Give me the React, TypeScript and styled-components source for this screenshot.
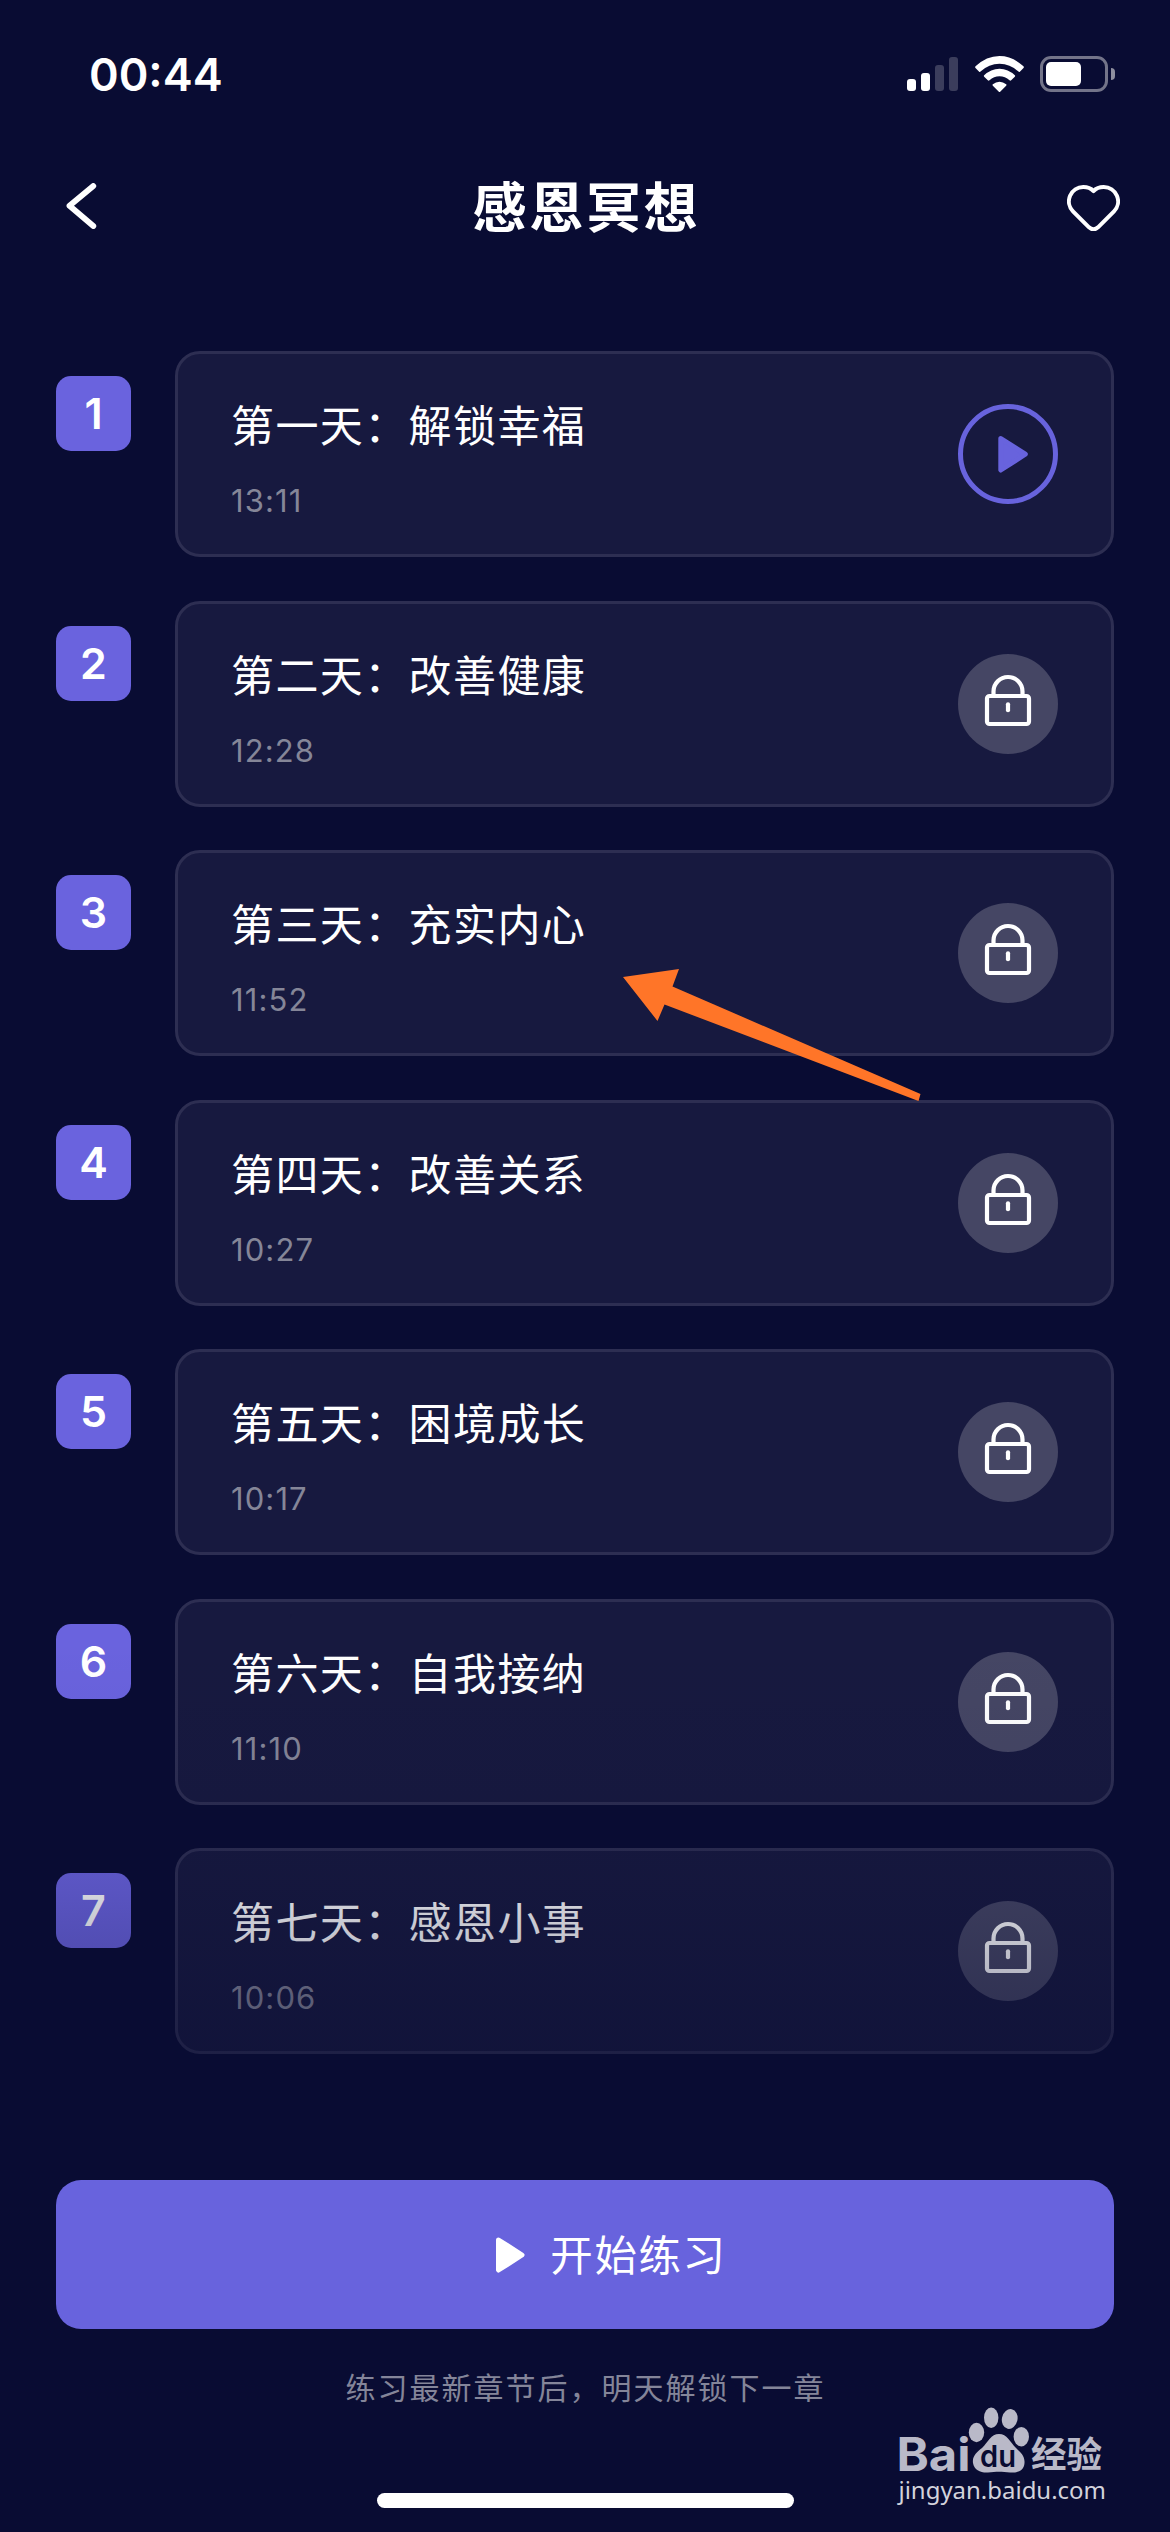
import React from "react";
import styled, { createGlobalStyle, css } from "styled-components";

const GlobalStyle = createGlobalStyle`
  * { box-sizing: border-box; }
  html, body { margin: 0; padding: 0; background: #090c33; }
  #root { width: 1170px; }
`;

const latin = `Inter, "Noto Sans CJK SC", sans-serif`;
const cjk = `"Noto Sans CJK SC", Inter, sans-serif`;

const Screen = styled.main`
  position: relative;
  display: flex;
  flex-direction: column;
  width: 1170px;
  height: 2532px;
  overflow: hidden;
  background: #090c33;
  color: #fff;
  font-family: ${cjk};
`;

const StatusBar = styled.div`
  display: flex;
  align-items: center;
  justify-content: space-between;
  height: 148px;
  padding: 0 55px 0 89px;
`;

const Clock = styled.div`
  padding-top: 1px;
  font: 600 45px/60px ${latin};
  letter-spacing: 0;
`;

const StatusIcons = styled.div`
  display: flex;
  align-items: flex-end;
`;

const Bars = styled.div`
  display: flex;
  align-items: flex-end;
  gap: 5px;
  height: 36px;
  padding-bottom: 1px;
  margin-right: 17px;
`;

const Bar = styled.span<{ $h: number; $on?: boolean }>`
  width: 9px;
  height: ${(p) => p.$h}px;
  border-radius: 3px;
  background: ${(p) => (p.$on ? "#fff" : "#3b3d5c")};
`;

const BatteryShell = styled.div`
  width: 68px;
  height: 36px;
  margin-left: 16px;
  padding: 3px;
  border: 3px solid #737489;
  border-radius: 11px;
`;

const BatteryLevel = styled.div`
  width: 35px;
  height: 24px;
  border-radius: 5px;
  background: #fff;
`;

const BatteryTip = styled.div`
  width: 4px;
  height: 12px;
  margin: 0 0 12px 3px;
  border-radius: 0 4px 4px 0;
  background: #8d8e9e;
`;

const Header = styled.header`
  display: grid;
  grid-template-columns: 100px 1fr 100px;
  align-items: center;
  height: 116px;
  padding: 0 35px;
`;

const Title = styled.h1`
  margin: 0;
  padding: 0 0 3px 3px;
  text-align: center;
  font: 700 54px/80px ${cjk};
  letter-spacing: 3px;
`;

const IconButton = styled.button<{ $side: "left" | "right" }>`
  display: flex;
  justify-content: ${(p) => (p.$side === "left" ? "flex-start" : "flex-end")};
  padding: ${(p) => (p.$side === "left" ? "0 0 0 30px" : "4px 15.5px 0 0")};
  border: 0;
  background: none;
`;

const Lessons = styled.ol`
  display: flex;
  flex-direction: column;
  gap: 43.5px;
  margin: 87px 0 0;
  padding: 0 56px;
  list-style: none;
`;

const Lesson = styled.li`
  display: flex;
  align-items: flex-start;
  gap: 44px;
  height: 206px;
`;

const Badge = styled.div`
  display: flex;
  align-items: center;
  justify-content: center;
  width: 75px;
  height: 75px;
  margin-top: 25px;
  border-radius: 15px;
  background: #6a63de;
  font: 600 43px/75px ${latin};
`;

const Card = styled.article`
  display: flex;
  flex: 1;
  align-items: center;
  justify-content: space-between;
  height: 206px;
  padding: 0 53px;
  border: 3px solid #2d2e52;
  border-radius: 25px;
  background: #17193f;
`;

const CardText = styled.div`
  display: flex;
  flex-direction: column;
  gap: 28px;
  padding-top: 6px;
`;

const LessonTitle = styled.h2`
  margin: 0;
  font: 400 43px/60px ${cjk};
  letter-spacing: 1.4px;
`;

const Duration = styled.span`
  font: 400 31px/40px ${latin};
  letter-spacing: 1.1px;
  color: #858698;
`;

const Action = styled.button<{ $locked: boolean }>`
  width: 100px;
  height: 100px;
  padding: 0;
  border: 0;
  border-radius: 50%;
  background: none;
  ${(p) =>
    p.$locked &&
    css`
      background: #454664;
    `}
`;

const Glyph = styled.svg`
  display: block;
  flex: none;
`;

const BottomFade = styled.div`
  position: absolute;
  left: 0;
  right: 0;
  top: 1640px;
  height: 530px;
  background: linear-gradient(
    rgba(9, 12, 51, 0),
    rgba(9, 12, 51, 0.04) 120px,
    rgba(9, 12, 51, 0.15) 233px,
    rgba(9, 12, 51, 0.25) 308px,
    rgba(9, 12, 51, 0.41) 414px,
    rgba(9, 12, 51, 0.58) 530px
  );
`;

const StartButton = styled.button`
  display: flex;
  align-items: center;
  justify-content: center;
  gap: 25px;
  height: 149px;
  margin: 126px 56px 0;
  padding: 0 0 0 53px;
  border: 0;
  border-radius: 25px;
  background: #6863dd;
  color: #fff;
`;

const StartLabel = styled.span`
  padding-bottom: 4px;
  font: 400 42.5px/60px ${cjk};
  letter-spacing: 1.6px;
`;

const Hint = styled.p`
  margin: 33px 0 0;
  padding-left: 1px;
  text-align: center;
  font: 400 30px/48px ${cjk};
  letter-spacing: 2px;
  color: #848599;
`;

const HomeIndicator = styled.div`
  width: 417px;
  height: 15px;
  margin: auto auto 24px;
  border-radius: 8px;
  background: #fff;
`;

const PointerArrow = styled.svg`
  position: absolute;
  left: 620px;
  top: 960px;
`;

const Watermark = styled.svg`
  position: absolute;
  left: 890px;
  top: 2400px;
`;

const lessons = [
  ["第一天：解锁幸福", "13:11"],
  ["第二天：改善健康", "12:28"],
  ["第三天：充实内心", "11:52"],
  ["第四天：改善关系", "10:27"],
  ["第五天：困境成长", "10:17"],
  ["第六天：自我接纳", "11:10"],
  ["第七天：感恩小事", "10:06"],
];

const Wifi = () => (
  <Glyph width="49" height="36" viewBox="0 0 146 108">
    <path
      fill="#fff"
      d="M1 31Q34 0 73 0Q112 0 145 31Q147 34 145 36L134 47Q132 49 129 46Q105 23 73 23Q41 23 17 46Q14 49 12 47L1 36Q-1 34 1 31Z
      M27 58Q47 38 73 38Q99 38 119 58Q121 60 119 62L108 73Q106 75 103 73Q90 61 73 61Q56 61 43 73Q40 75 38 73L27 62Q25 60 27 58Z
      M53 85Q62 77 73 77Q84 77 93 85Q95 87 93 89L75 107Q73 109 71 107L53 89Q51 87 53 85Z"
    />
  </Glyph>
);

const PlayMark = () => (
  <Glyph width="100" height="100" viewBox="0 0 100 100">
    <circle cx="50" cy="50" r="47.5" fill="none" stroke="#6863dd" strokeWidth="5" />
    <path d="M42.8 34.5L67.3 50.2L42.8 66Z" fill="#6863dd" stroke="#6863dd" strokeWidth="5" strokeLinejoin="round" />
  </Glyph>
);

const LockMark = () => (
  <Glyph width="100" height="100" viewBox="0 0 100 100" fill="none" stroke="#fff" strokeWidth="4.2">
    <rect x="29" y="42" width="42" height="28" rx="2.5" />
    <path d="M35.5 42V37.5A14.5 14.5 0 0 1 64.5 37.5V42" />
    <path d="M50 50.3V56.2" strokeLinecap="round" />
  </Glyph>
);

export default function App() {
  return (
    <>
      <GlobalStyle />
      <Screen>
        <StatusBar>
          <Clock>00:44</Clock>
          <StatusIcons>
            <Bars>
              <Bar $h={12} $on />
              <Bar $h={18} $on />
              <Bar $h={26} />
              <Bar $h={34} />
            </Bars>
            <Wifi />
            <BatteryShell>
              <BatteryLevel />
            </BatteryShell>
            <BatteryTip />
          </StatusIcons>
        </StatusBar>

        <Header>
          <IconButton $side="left" aria-label="back">
            <Glyph width="32" height="46" viewBox="0 0 32 46">
              <path d="M28.3 3L4.5 22.8L28.3 43" fill="none" stroke="#fff" strokeWidth="5.8" strokeLinecap="round" strokeLinejoin="round" />
            </Glyph>
          </IconButton>
          <Title>感恩冥想</Title>
          <IconButton $side="right" aria-label="favorite">
            <Glyph width="53" height="46.7" viewBox="0 0 159 140">
              <path
                d="M79.5 18C71 9 60 6 49 6A43 43 0 0 0 18 79L66 127Q79.5 139 93 127L141 79A43 43 0 0 0 110 6C99 6 88 9 79.5 18Z"
                fill="none"
                stroke="#fff"
                strokeWidth="12"
                strokeLinejoin="round"
              />
            </Glyph>
          </IconButton>
        </Header>

        <Lessons>
          {lessons.map(([title, time], i) => (
            <Lesson key={title}>
              <Badge>{i + 1}</Badge>
              <Card>
                <CardText>
                  <LessonTitle>{title}</LessonTitle>
                  <Duration>{time}</Duration>
                </CardText>
                <Action $locked={i > 0}>{i > 0 ? <LockMark /> : <PlayMark />}</Action>
              </Card>
            </Lesson>
          ))}
        </Lessons>

        <StartButton>
          <Glyph width="29" height="36" viewBox="0 0 29 36">
            <path d="M2.5 3L26 18L2.5 33Z" fill="#fff" stroke="#fff" strokeWidth="5" strokeLinejoin="round" />
          </Glyph>
          <StartLabel>开始练习</StartLabel>
        </StartButton>
        <Hint>练习最新章节后，明天解锁下一章</Hint>
        <HomeIndicator />

        <BottomFade />
        <PointerArrow width="304" height="144" viewBox="0 0 304 144">
          <path d="M3 17L59 9L52.5 26.5L300.5 134L298.5 141L44.5 44.5L37.5 61Z" fill="#ff7528" />
        </PointerArrow>

        <Watermark width="230" height="120" viewBox="0 0 230 120" fill="#b9b9c8">
          <text x="6.5" y="71" fontFamily="Inter, sans-serif" fontWeight="700" fontSize="46" textLength="74" lengthAdjust="spacingAndGlyphs">
            Bai
          </text>
          <ellipse cx="86.5" cy="32.5" rx="7.7" ry="9.7" />
          <ellipse cx="101.2" cy="17.7" rx="7.2" ry="10.2" />
          <ellipse cx="119.7" cy="19" rx="7.8" ry="10" transform="rotate(12 119.7 19)" />
          <ellipse cx="131.3" cy="36.7" rx="7.7" ry="9.7" />
          <path d="M109 34C117 34 120 42 126 48C131 53 135 56 134.5 63C134 71 127 73 120 72.5C112 71.5 106 71.5 98 72.5C91 73 84 70 83 63C82 56 87 52 92 48C98 42 101 34 109 34Z" />
          <text x="90" y="67" fill="#090c33" fontFamily="Inter, sans-serif" fontWeight="600" fontSize="30" textLength="36" lengthAdjust="spacingAndGlyphs">
            du
          </text>
          <text x="141" y="68" fontFamily="Noto Sans CJK SC, sans-serif" fontWeight="700" fontSize="36" textLength="71" lengthAdjust="spacingAndGlyphs">
            经验
          </text>
          <text x="8.5" y="99" fill="#d3d3dc" fontFamily="Noto Sans, Open Sans, sans-serif" fontSize="24" textLength="207.5" lengthAdjust="spacingAndGlyphs">
            jingyan.baidu.com
          </text>
        </Watermark>
      </Screen>
    </>
  );
}
